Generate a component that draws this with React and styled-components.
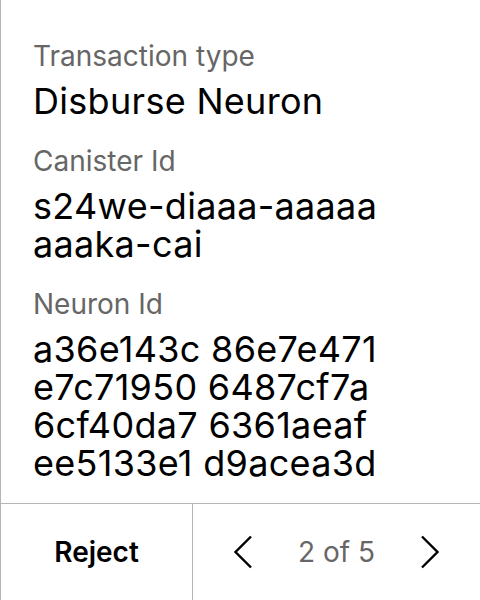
import React from 'react';
import styled, { createGlobalStyle } from 'styled-components';

const GlobalStyle = createGlobalStyle`
  html, body {
    margin: 0;
    padding: 0;
    background: #fff;
  }
  body {
    font-family: Inter, "Noto Sans", sans-serif;
  }
`;

const Screen = styled.div`
  width: 480px;
  height: 600px;
  box-sizing: border-box;
  border-left: 1px solid #b5b5b5;
  display: flex;
  flex-direction: column;
  background: #fff;
  color: #000;
`;

const Content = styled.div`
  flex: 1;
  padding: 39px 0 0 32px;
  display: flex;
  flex-direction: column;
  gap: 24px;
`;

const Field = styled.div`
  display: flex;
  flex-direction: column;
  gap: 9px;
`;

const Label = styled.div`
  font-size: 28px;
  line-height: 34px;
  color: #666;
`;

const Value = styled.div`
  font-size: 36px;
  line-height: 38px;
  letter-spacing: 0.3px;
  color: #000;
`;

const Footer = styled.div`
  height: 96px;
  border-top: 1px solid #b5b5b5;
  display: flex;
`;

const RejectButton = styled.div`
  width: 191px;
  border-right: 1px solid #b5b5b5;
  display: flex;
  align-items: center;
  justify-content: center;
  font-size: 28px;
  font-weight: 600;
`;

const Pager = styled.div`
  flex: 1;
  display: flex;
  align-items: center;
  justify-content: space-between;
  padding: 0 34px;
`;

const PageText = styled.span`
  font-size: 28px;
  color: #666;
`;

const Chevron = ({ dir }) => (
  <svg width="32" height="40" viewBox="0 0 32 40" fill="none">
    <path
      d={dir === 'left' ? 'M24 4.5 L8.5 20 L24 35.5' : 'M8 4.5 L23.5 20 L8 35.5'}
      stroke="#000"
      strokeWidth="2.4"
    />
  </svg>
);

const fields = [
  { label: 'Transaction type', lines: ['Disburse Neuron'] },
  { label: 'Canister Id', lines: ['s24we-diaaa-aaaaa', 'aaaka-cai'] },
  {
    label: 'Neuron Id',
    lines: ['a36e143c 86e7e471', 'e7c71950 6487cf7a', '6cf40da7 6361aeaf', 'ee5133e1 d9acea3d']
  }
];

export default function App() {
  return (
    <>
      <GlobalStyle />
      <Screen>
        <Content>
          {fields.map((f) => (
            <Field key={f.label}>
              <Label>{f.label}</Label>
              <Value>
                {f.lines.map((l, i) => (
                  <React.Fragment key={l}>
                    {i > 0 && <br />}
                    {l}
                  </React.Fragment>
                ))}
              </Value>
            </Field>
          ))}
        </Content>
        <Footer>
          <RejectButton>Reject</RejectButton>
          <Pager>
            <Chevron dir="left" />
            <PageText>2 of 5</PageText>
            <Chevron dir="right" />
          </Pager>
        </Footer>
      </Screen>
    </>
  );
}
